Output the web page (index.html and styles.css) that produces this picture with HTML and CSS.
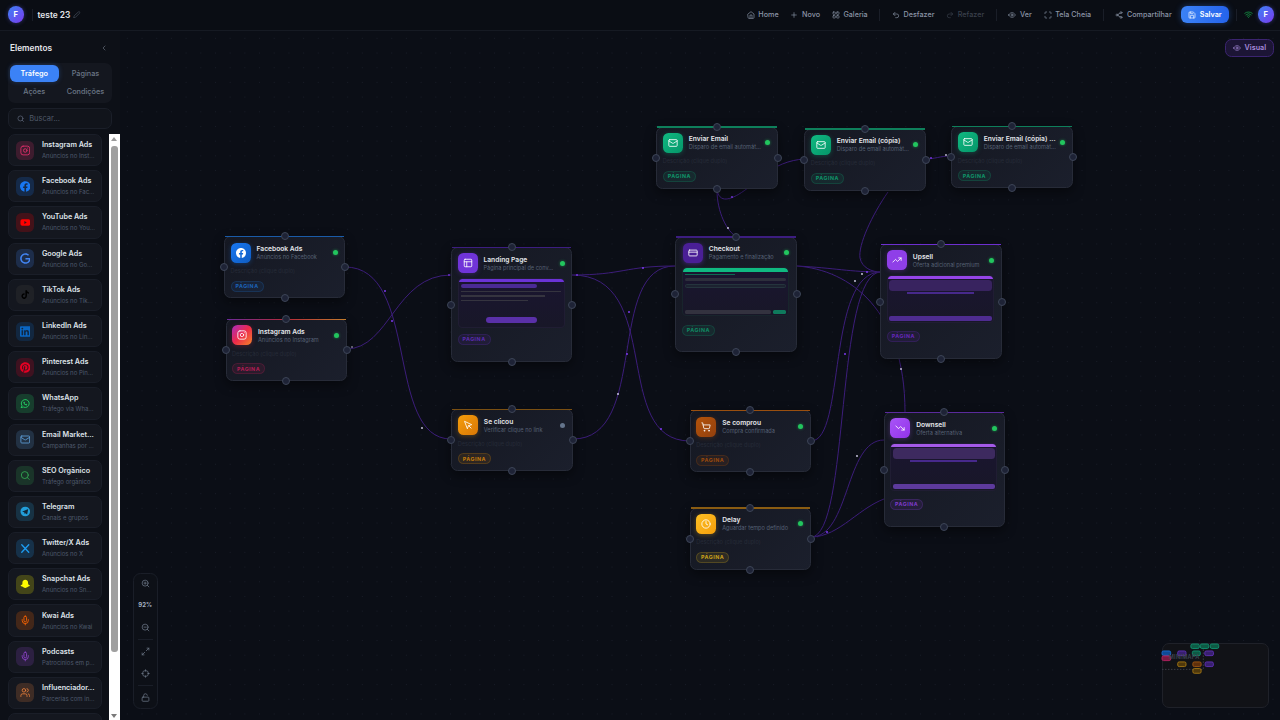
FILE: index.html
```html
<!DOCTYPE html>
<html lang="pt-BR">
<head>
<meta charset="utf-8">
<title>teste 23</title>
<link rel="stylesheet" href="styles.css">
</head>
<body>
<svg class="defs" aria-hidden="true">
  <symbol id="i-home" viewBox="0 0 24 24"><path d="M3 9l9-7 9 7v11a2 2 0 0 1-2 2H5a2 2 0 0 1-2-2z"/><path d="M9 22V12h6v10"/></symbol>
  <symbol id="i-plus" viewBox="0 0 24 24"><path d="M5 12h14M12 5v14"/></symbol>
  <symbol id="i-grid" viewBox="0 0 24 24"><rect x="3" y="3" width="7" height="7" rx="1.5"/><rect x="14" y="3" width="7" height="7" rx="1.5"/><rect x="3" y="14" width="7" height="7" rx="1.5"/><rect x="14" y="14" width="7" height="7" rx="1.5"/></symbol>
  <symbol id="i-undo" viewBox="0 0 24 24"><path d="M9 14 4 9l5-5"/><path d="M4 9h10.5a5.5 5.5 0 0 1 0 11H11"/></symbol>
  <symbol id="i-redo" viewBox="0 0 24 24"><path d="m15 14 5-5-5-5"/><path d="M20 9H9.5a5.5 5.5 0 0 0 0 11H13"/></symbol>
  <symbol id="i-eye" viewBox="0 0 24 24"><path d="M2 12s3-7 10-7 10 7 10 7-3 7-10 7-10-7-10-7Z"/><circle cx="12" cy="12" r="3"/></symbol>
  <symbol id="i-full" viewBox="0 0 24 24"><path d="M8 3H5a2 2 0 0 0-2 2v3M21 8V5a2 2 0 0 0-2-2h-3M3 16v3a2 2 0 0 0 2 2h3M16 21h3a2 2 0 0 0 2-2v-3"/></symbol>
  <symbol id="i-share" viewBox="0 0 24 24"><circle cx="18" cy="5" r="3"/><circle cx="6" cy="12" r="3"/><circle cx="18" cy="19" r="3"/><path d="m8.6 13.5 6.8 4M15.4 6.5l-6.8 4"/></symbol>
  <symbol id="i-save" viewBox="0 0 24 24"><path d="M15.2 3a2 2 0 0 1 1.4.6l3.8 3.8a2 2 0 0 1 .6 1.4V19a2 2 0 0 1-2 2H5a2 2 0 0 1-2-2V5a2 2 0 0 1 2-2z"/><path d="M17 21v-7a1 1 0 0 0-1-1H8a1 1 0 0 0-1 1v7"/><path d="M7 3v4a1 1 0 0 0 1 1h7"/></symbol>
  <symbol id="i-wifi" viewBox="0 0 24 24"><path d="M12 20h.01M2 8.82a15 15 0 0 1 20 0M5 12.86a10 10 0 0 1 14 0M8.5 16.43a5 5 0 0 1 7 0"/></symbol>
  <symbol id="i-pencil" viewBox="0 0 24 24"><path d="M17 3a2.85 2.83 0 1 1 4 4L7.5 20.5 2 22l1.5-5.5Z"/></symbol>
  <symbol id="i-chev" viewBox="0 0 24 24"><path d="m15 18-6-6 6-6"/></symbol>
  <symbol id="i-search" viewBox="0 0 24 24"><circle cx="11" cy="11" r="8"/><path d="m21 21-4.3-4.3"/></symbol>
  <symbol id="i-zin" viewBox="0 0 24 24"><circle cx="11" cy="11" r="8"/><path d="m21 21-4.3-4.3M11 8v6M8 11h6"/></symbol>
  <symbol id="i-zout" viewBox="0 0 24 24"><circle cx="11" cy="11" r="8"/><path d="m21 21-4.3-4.3M8 11h6"/></symbol>
  <symbol id="i-expand" viewBox="0 0 24 24"><path d="M21 3l-7 7M3 21l7-7M16 3h5v5M3 16v5h5"/></symbol>
  <symbol id="i-locate" viewBox="0 0 24 24"><circle cx="12" cy="12" r="8"/><path d="M12 2v4M12 18v4M2 12h4M18 12h4"/></symbol>
  <symbol id="i-unlock" viewBox="0 0 24 24"><rect x="3" y="11" width="18" height="11" rx="2"/><path d="M7 11V7a5 5 0 0 1 9.9-1"/></symbol>
  <symbol id="i-insta" viewBox="0 0 24 24"><rect x="2" y="2" width="20" height="20" rx="5"/><path d="M16 11.37A4 4 0 1 1 12.63 8 4 4 0 0 1 16 11.37z"/><path d="M17.5 6.5h.01"/></symbol>
  <symbol id="i-fb" viewBox="0 0 24 24"><path fill="currentColor" stroke="none" d="M24 12.07C24 5.4 18.63 0 12 0S0 5.4 0 12.07c0 6.02 4.39 11.02 10.13 11.93v-8.44H7.08v-3.49h3.05V9.41c0-3.02 1.79-4.69 4.53-4.69 1.31 0 2.68.24 2.68.24v2.97h-1.51c-1.49 0-1.96.93-1.96 1.89v2.25h3.33l-.53 3.49h-2.8V24C19.61 23.09 24 18.09 24 12.07z"/></symbol>
  <symbol id="i-yt" viewBox="0 0 24 24"><rect x="1" y="4.5" width="22" height="15" rx="4" fill="currentColor" stroke="none"/><path d="M10 8.8v6.4l5.4-3.2z" fill="#3a1418" stroke="none"/></symbol>
  <symbol id="i-google" viewBox="0 0 24 24"><path fill="currentColor" stroke="none" d="M12.48 10.92v3.28h7.84c-.24 1.84-.853 3.187-1.787 4.133-1.147 1.147-2.933 2.4-6.053 2.4-4.827 0-8.6-3.893-8.6-8.72s3.773-8.72 8.6-8.72c2.6 0 4.507 1.027 5.907 2.347l2.307-2.307C18.747 1.44 16.133 0 12.48 0 5.867 0 .307 5.387.307 12s5.56 12 12.173 12c3.573 0 6.267-1.173 8.373-3.36 2.16-2.16 2.84-5.213 2.84-7.667 0-.76-.053-1.467-.173-2.053H12.48z"/></symbol>
  <symbol id="i-tiktok" viewBox="0 0 24 24"><path fill="currentColor" stroke="none" d="M19.59 6.69a4.83 4.83 0 0 1-3.77-4.25V2h-3.45v13.67a2.89 2.89 0 0 1-5.2 1.74 2.89 2.89 0 0 1 2.31-4.64 2.93 2.93 0 0 1 .88.13V9.4a6.84 6.84 0 0 0-1-.05A6.33 6.33 0 0 0 5 20.1a6.34 6.34 0 0 0 10.86-4.43v-7a8.16 8.16 0 0 0 4.77 1.52v-3.4a4.85 4.85 0 0 1-1-.1z"/></symbol>
  <symbol id="i-in" viewBox="0 0 24 24"><path fill="currentColor" stroke="none" d="M20.447 20.452h-3.554v-5.569c0-1.328-.027-3.037-1.852-3.037-1.853 0-2.136 1.445-2.136 2.939v5.667H9.351V9h3.414v1.561h.046c.477-.9 1.637-1.85 3.37-1.85 3.601 0 4.267 2.37 4.267 5.455v6.286zM5.337 7.433a2.062 2.062 0 0 1-2.063-2.065 2.064 2.064 0 1 1 2.063 2.065zm1.782 13.019H3.555V9h3.564v11.452zM22.225 0H1.771C.792 0 0 .774 0 1.729v20.542C0 23.227.792 24 1.771 24h20.451C23.2 24 24 23.227 24 22.271V1.729C24 .774 23.2 0 22.222 0h.003z"/></symbol>
  <symbol id="i-pin" viewBox="0 0 24 24"><path fill="currentColor" stroke="none" d="M12.017 0C5.396 0 .029 5.367.029 11.987c0 5.079 3.158 9.417 7.618 11.162-.105-.949-.199-2.403.041-3.439.219-.937 1.406-5.957 1.406-5.957s-.359-.72-.359-1.781c0-1.663.967-2.911 2.168-2.911 1.024 0 1.518.769 1.518 1.688 0 1.029-.653 2.567-.992 3.992-.285 1.193.6 2.165 1.775 2.165 2.128 0 3.768-2.245 3.768-5.487 0-2.861-2.063-4.869-5.008-4.869-3.41 0-5.409 2.562-5.409 5.199 0 1.033.394 2.143.889 2.741.099.12.112.225.085.345-.09.375-.293 1.199-.334 1.363-.053.225-.172.271-.401.165-1.495-.69-2.433-2.878-2.433-4.646 0-3.776 2.748-7.252 7.92-7.252 4.158 0 7.392 2.967 7.392 6.923 0 4.135-2.607 7.462-6.233 7.462-1.214 0-2.354-.629-2.758-1.379l-.749 2.848c-.269 1.045-1.004 2.352-1.498 3.146 1.123.345 2.306.535 3.55.535 6.607 0 11.985-5.365 11.985-11.987C23.97 5.39 18.592.026 11.985.026L12.017 0z"/></symbol>
  <symbol id="i-wa" viewBox="0 0 24 24"><path d="M3 21l1.65-3.8a9 9 0 1 1 3.4 2.9L3 21"/><path d="M9 10a.5.5 0 0 0 1 0V9a.5.5 0 0 0-1 0v1a5 5 0 0 0 5 5h1a.5.5 0 0 0 0-1h-1a.5.5 0 0 0 0 1"/></symbol>
  <symbol id="i-mail" viewBox="0 0 24 24"><rect x="2" y="4" width="20" height="16" rx="2"/><path d="m22 7-8.97 5.7a1.94 1.94 0 0 1-2.06 0L2 7"/></symbol>
  <symbol id="i-tg" viewBox="0 0 24 24"><circle cx="12" cy="12" r="11" fill="currentColor" stroke="none"/><path fill="#10283a" stroke="none" d="M5.5 11.8 17.6 7c.6-.2 1 .2.9.9l-2 9.6c-.1.7-.6.8-1.1.5l-3-2.2-1.5 1.4c-.2.2-.5.3-.6-.1l-.6-3.5-3.9-1.2c-.7-.2-.7-.6-.2-.8z"/></symbol>
  <symbol id="i-x" viewBox="0 0 24 24"><path stroke-width="3" d="M4 3.5 20 20.5M20 3.5 4 20.5"/></symbol>
  <symbol id="i-snap" viewBox="0 0 24 24"><path fill="currentColor" stroke="none" d="M12 3c3.5 0 5.5 2.5 5.5 6v2.5l3.5 2.5c-.6 1.3-2.3 1.7-3.7 1.9-.3 1.1-1 1.4-2 1.2-1.2.7-2 1.400-3.300 1.400s-2.100-.7-3.300-1.400c-1 .2-1.700-.1-2-1.200-1.400-.2-3.100-.6-3.700-1.900l3.500-2.500V9c0-3.500 2-6 5.500-6z"/></symbol>
  <symbol id="i-mic" viewBox="0 0 24 24"><path d="M12 2a3 3 0 0 0-3 3v7a3 3 0 0 0 6 0V5a3 3 0 0 0-3-3Z"/><path d="M19 10v2a7 7 0 0 1-14 0v-2M12 19v3"/></symbol>
  <symbol id="i-users" viewBox="0 0 24 24"><path d="M16 21v-2a4 4 0 0 0-4-4H6a4 4 0 0 0-4 4v2"/><circle cx="9" cy="7" r="4"/><path d="M22 21v-2a4 4 0 0 0-3-3.87M16 3.13a4 4 0 0 1 0 7.75"/></symbol>
  <symbol id="i-layout" viewBox="0 0 24 24"><rect x="3" y="3" width="18" height="18" rx="2"/><path d="M3 9h18M9 21V9"/></symbol>
  <symbol id="i-card" viewBox="0 0 24 24"><rect x="2" y="5" width="20" height="14" rx="2"/><path d="M2 10h20"/></symbol>
  <symbol id="i-up" viewBox="0 0 24 24"><path d="M22 7l-8.5 8.5-5-5L2 17"/><path d="M16 7h6v6"/></symbol>
  <symbol id="i-down" viewBox="0 0 24 24"><path d="M22 17l-8.5-8.5-5 5L2 7"/><path d="M16 17h6v-6"/></symbol>
  <symbol id="i-click" viewBox="0 0 24 24"><path d="M4 4l6.500 17 2.400-7.100L20 11.500Z"/><path d="m13.500 13.500 6 6"/></symbol>
  <symbol id="i-cart" viewBox="0 0 24 24"><circle cx="8" cy="21" r="1"/><circle cx="19" cy="21" r="1"/><path d="M2 2h2l2.7 12.4a2 2 0 0 0 2 1.600h9.800a2 2 0 0 0 1.900-1.600L22 7H5.100"/></symbol>
  <symbol id="i-clock" viewBox="0 0 24 24"><circle cx="12" cy="12" r="10"/><path d="M12 6v6l4 2"/></symbol>
</svg>

<div class="app">
  <header class="topbar">
    <div class="tb-left">
      <span class="avatar">F</span>
      <span class="tb-divider"></span>
      <span class="project">teste 23</span>
      <svg class="ic pencil"><use href="#i-pencil"/></svg>
    </div>
    <nav class="tb-right">
      <a class="tb-link"><svg class="ic"><use href="#i-home"/></svg>Home</a>
      <a class="tb-link"><svg class="ic"><use href="#i-plus"/></svg>Novo</a>
      <a class="tb-link"><svg class="ic"><use href="#i-grid"/></svg>Galeria</a>
      <span class="tb-divider sep"></span>
      <a class="tb-link"><svg class="ic"><use href="#i-undo"/></svg>Desfazer</a>
      <a class="tb-link disabled"><svg class="ic"><use href="#i-redo"/></svg>Refazer</a>
      <span class="tb-divider sep"></span>
      <a class="tb-link"><svg class="ic"><use href="#i-eye"/></svg>Ver</a>
      <a class="tb-link"><svg class="ic"><use href="#i-full"/></svg>Tela Cheia</a>
      <span class="tb-divider sep"></span>
      <a class="tb-link"><svg class="ic"><use href="#i-share"/></svg>Compartilhar</a>
      <button class="save"><svg class="ic"><use href="#i-save"/></svg>Salvar</button>
      <span class="tb-divider sep2"></span>
      <svg class="ic wifi"><use href="#i-wifi"/></svg>
      <span class="avatar">F</span>
    </nav>
  </header>

  <main class="main">
    <aside class="sidebar">
      <div class="side-head"><h2>Elementos</h2><svg class="ic"><use href="#i-chev"/></svg></div>
      <div class="tabs">
        <span class="tab active">Tráfego</span>
        <span class="tab">Páginas</span>
        <span class="tab">Ações</span>
        <span class="tab">Condições</span>
      </div>
      <div class="search"><svg class="ic"><use href="#i-search"/></svg><span>Buscar...</span></div>
      <div class="list-wrap">
        <ul class="list">
          <li class="item s-insta"><span class="item-ic"><svg class="ic"><use href="#i-insta"/></svg></span><div class="item-text"><b>Instagram Ads</b><small>Anúncios no Inst...</small></div></li>
          <li class="item s-fb"><span class="item-ic"><svg class="ic"><use href="#i-fb"/></svg></span><div class="item-text"><b>Facebook Ads</b><small>Anúncios no Fac...</small></div></li>
          <li class="item s-yt"><span class="item-ic"><svg class="ic"><use href="#i-yt"/></svg></span><div class="item-text"><b>YouTube Ads</b><small>Anúncios no You...</small></div></li>
          <li class="item s-g"><span class="item-ic"><svg class="ic"><use href="#i-google"/></svg></span><div class="item-text"><b>Google Ads</b><small>Anúncios no Go...</small></div></li>
          <li class="item s-tt"><span class="item-ic"><svg class="ic"><use href="#i-tiktok"/></svg></span><div class="item-text"><b>TikTok Ads</b><small>Anúncios no Tik...</small></div></li>
          <li class="item s-in"><span class="item-ic"><svg class="ic"><use href="#i-in"/></svg></span><div class="item-text"><b>LinkedIn Ads</b><small>Anúncios no Lin...</small></div></li>
          <li class="item s-pin"><span class="item-ic"><svg class="ic"><use href="#i-pin"/></svg></span><div class="item-text"><b>Pinterest Ads</b><small>Anúncios no Pin...</small></div></li>
          <li class="item s-wa"><span class="item-ic"><svg class="ic"><use href="#i-wa"/></svg></span><div class="item-text"><b>WhatsApp</b><small>Tráfego via Wha...</small></div></li>
          <li class="item s-mail"><span class="item-ic"><svg class="ic"><use href="#i-mail"/></svg></span><div class="item-text"><b>Email Market...</b><small>Campanhas por ...</small></div></li>
          <li class="item s-seo"><span class="item-ic"><svg class="ic"><use href="#i-search"/></svg></span><div class="item-text"><b>SEO Orgânico</b><small>Tráfego orgânico</small></div></li>
          <li class="item s-tg"><span class="item-ic"><svg class="ic"><use href="#i-tg"/></svg></span><div class="item-text"><b>Telegram</b><small>Canais e grupos</small></div></li>
          <li class="item s-x"><span class="item-ic"><svg class="ic"><use href="#i-x"/></svg></span><div class="item-text"><b>Twitter/X Ads</b><small>Anúncios no X</small></div></li>
          <li class="item s-snap"><span class="item-ic"><svg class="ic"><use href="#i-snap"/></svg></span><div class="item-text"><b>Snapchat Ads</b><small>Anúncios no Sn...</small></div></li>
          <li class="item s-kwai"><span class="item-ic"><svg class="ic"><use href="#i-mic"/></svg></span><div class="item-text"><b>Kwai Ads</b><small>Anúncios no Kwai</small></div></li>
          <li class="item s-pod"><span class="item-ic"><svg class="ic"><use href="#i-mic"/></svg></span><div class="item-text"><b>Podcasts</b><small>Patrocínios em p...</small></div></li>
          <li class="item s-inf"><span class="item-ic"><svg class="ic"><use href="#i-users"/></svg></span><div class="item-text"><b>Influenciador...</b><small>Parcerias com in...</small></div></li>
          <li class="item s-last"><span class="item-ic"></span></li>
        </ul>
        <div class="scrollbar"><i class="arrow up"></i><i class="thumb"></i><i class="arrow dn"></i></div>
      </div>
    </aside>

    <section class="canvas">
      <svg class="edges" viewBox="120 31 1160 689">
        <g class="edge-lines">
          <path d="M345 267C420 267 385 439 451 439"/>
          <path d="M346 349C390 349 395 275 451 275"/>
          <path d="M572 275C624 275 624 266 675 266"/>
          <path d="M572 275C665 275 610 441 690 441"/>
          <path d="M573 439C650 439 605 266 675 266"/>
          <path d="M717 190C720 206 735 200 760 178C775 165 790 160 804 159"/>
          <path d="M717 190C717 212 727 232 737 237"/>
          <path d="M888 192C872 215 858 245 860 258C862 268 872 272 881 272"/>
          <path d="M925 159C935 159 940 156 951 156"/>
          <path d="M797 266C835 268 850 272 881 272"/>
          <path d="M797 266C850 270 905 310 905 412"/>
          <path d="M811 441C846 441 826 272 881 272"/>
          <path d="M811 537C850 537 835 272 881 272"/>
          <path d="M811 537C850 537 845 440 884 440"/>
          <path d="M811 537C840 537 860 505 890 497"/>
        </g>
        <g class="edge-dots">
          <circle cx="385" cy="291" r="1"/>
          <circle cx="392" cy="321" r="1"/>
          <circle cx="352" cy="347" r=".8" class="light"/>
          <circle cx="422" cy="428" r=".9" class="light"/>
          <circle cx="449" cy="275" r="1"/>
          <circle cx="577" cy="275" r="1"/>
          <circle cx="643" cy="268" r="1"/>
          <circle cx="629" cy="312" r="1"/>
          <circle cx="627" cy="354" r="1"/>
          <circle cx="618" cy="394" r=".9" class="light"/>
          <circle cx="661" cy="429" r="1"/>
          <circle cx="728" cy="228" r=".9" class="light"/>
          <circle cx="732" cy="197" r="1"/>
          <circle cx="931" cy="158" r="1"/>
          <circle cx="946" cy="155" r=".9" class="light"/>
          <circle cx="867" cy="272" r="1"/>
          <circle cx="862" cy="274" r=".9" class="light"/>
          <circle cx="855" cy="281" r=".9" class="light"/>
          <circle cx="845" cy="354" r="1"/>
          <circle cx="901" cy="369" r=".9" class="light"/>
          <circle cx="857" cy="456" r=".9" class="light"/>
          <circle cx="827" cy="532" r="1"/>
        </g>
      </svg>

      <article class="node plain n-fb c-fb">
        <i class="handle ht"></i><i class="handle hb"></i><i class="handle hl"></i><i class="handle hr"></i>
        <header class="node-head"><span class="node-ic"><svg class="ic"><use href="#i-fb"/></svg></span><div class="node-text"><div class="node-title">Facebook Ads</div><div class="node-sub">Anúncios no Facebook</div></div><i class="status"></i></header>
        <p class="node-desc">Descrição (clique duplo)</p><span class="badge">PÁGINA</span>
      </article>
      <article class="node plain n-ig c-ig">
        <i class="handle ht"></i><i class="handle hb"></i><i class="handle hl"></i><i class="handle hr"></i>
        <header class="node-head"><span class="node-ic"><svg class="ic"><use href="#i-insta"/></svg></span><div class="node-text"><div class="node-title">Instagram Ads</div><div class="node-sub">Anúncios no Instagram</div></div><i class="status"></i></header>
        <p class="node-desc">Descrição (clique duplo)</p><span class="badge">PÁGINA</span>
      </article>
      <article class="node tall n-lp c-lp">
        <i class="handle ht"></i><i class="handle hb"></i><i class="handle hl"></i><i class="handle hr"></i>
        <header class="node-head"><span class="node-ic"><svg class="ic"><use href="#i-layout"/></svg></span><div class="node-text"><div class="node-title">Landing Page</div><div class="node-sub">Página principal de conv...</div></div><i class="status"></i></header>
        <div class="preview pv-lp"><i class="pv-top"></i><i class="pv-head"></i><i class="pv-line l1"></i><i class="pv-line l2"></i><i class="pv-line l3"></i><i class="pv-cta"></i></div>
        <span class="badge">PÁGINA</span>
      </article>
      <article class="node plain n-click c-click">
        <i class="handle ht"></i><i class="handle hb"></i><i class="handle hl"></i><i class="handle hr"></i>
        <header class="node-head"><span class="node-ic"><svg class="ic"><use href="#i-click"/></svg></span><div class="node-text"><div class="node-title">Se clicou</div><div class="node-sub">Verificar clique no link</div></div><i class="status off"></i></header>
        <p class="node-desc">Descrição (clique duplo)</p><span class="badge">PÁGINA</span>
      </article>
      <article class="node plain n-m1 c-mail">
        <i class="handle ht"></i><i class="handle hb"></i><i class="handle hl"></i><i class="handle hr"></i>
        <header class="node-head"><span class="node-ic"><svg class="ic"><use href="#i-mail"/></svg></span><div class="node-text"><div class="node-title">Enviar Email</div><div class="node-sub">Disparo de email automát...</div></div><i class="status"></i></header>
        <p class="node-desc">Descrição (clique duplo)</p><span class="badge">PÁGINA</span>
      </article>
      <article class="node plain n-m2 c-mail">
        <i class="handle ht"></i><i class="handle hb"></i><i class="handle hl"></i><i class="handle hr"></i>
        <header class="node-head"><span class="node-ic"><svg class="ic"><use href="#i-mail"/></svg></span><div class="node-text"><div class="node-title">Enviar Email (cópia)</div><div class="node-sub">Disparo de email automát...</div></div><i class="status"></i></header>
        <p class="node-desc">Descrição (clique duplo)</p><span class="badge">PÁGINA</span>
      </article>
      <article class="node plain n-m3 c-mail">
        <i class="handle ht"></i><i class="handle hb"></i><i class="handle hl"></i><i class="handle hr"></i>
        <header class="node-head"><span class="node-ic"><svg class="ic"><use href="#i-mail"/></svg></span><div class="node-text"><div class="node-title">Enviar Email (cópia) ...</div><div class="node-sub">Disparo de email automát...</div></div><i class="status"></i></header>
        <p class="node-desc">Descrição (clique duplo)</p><span class="badge">PÁGINA</span>
      </article>
      <article class="node tall n-co c-co">
        <i class="handle ht"></i><i class="handle hb"></i><i class="handle hl"></i><i class="handle hr"></i>
        <header class="node-head"><span class="node-ic"><svg class="ic"><use href="#i-card"/></svg></span><div class="node-text"><div class="node-title">Checkout</div><div class="node-sub">Pagamento e finalização</div></div><i class="status"></i></header>
        <div class="preview pv-co"><i class="pv-top"></i><i class="co-head"></i><i class="co-a"></i><i class="co-b"></i><div class="co-foot"><i class="co-c"></i><i class="co-d"></i></div></div>
        <span class="badge">PÁGINA</span>
      </article>
      <article class="node tall n-up c-up">
        <i class="handle ht"></i><i class="handle hb"></i><i class="handle hl"></i><i class="handle hr"></i>
        <header class="node-head"><span class="node-ic"><svg class="ic"><use href="#i-up"/></svg></span><div class="node-text"><div class="node-title">Upsell</div><div class="node-sub">Oferta adicional premium</div></div><i class="status"></i></header>
        <div class="preview pv-of"><i class="pv-top"></i><i class="of-panel"></i><i class="of-bar"></i><i class="of-cta"></i></div>
        <span class="badge">PÁGINA</span>
      </article>
      <article class="node tall n-dn c-dn">
        <i class="handle ht"></i><i class="handle hb"></i><i class="handle hl"></i><i class="handle hr"></i>
        <header class="node-head"><span class="node-ic"><svg class="ic"><use href="#i-down"/></svg></span><div class="node-text"><div class="node-title">Downsell</div><div class="node-sub">Oferta alternativa</div></div><i class="status"></i></header>
        <div class="preview pv-of"><i class="pv-top"></i><i class="of-panel"></i><i class="of-bar"></i><i class="of-cta"></i></div>
        <span class="badge">PÁGINA</span>
      </article>
      <article class="node plain n-buy c-buy">
        <i class="handle ht"></i><i class="handle hb"></i><i class="handle hl"></i><i class="handle hr"></i>
        <header class="node-head"><span class="node-ic"><svg class="ic"><use href="#i-cart"/></svg></span><div class="node-text"><div class="node-title">Se comprou</div><div class="node-sub">Compra confirmada</div></div><i class="status"></i></header>
        <p class="node-desc">Descrição (clique duplo)</p><span class="badge">PÁGINA</span>
      </article>
      <article class="node plain n-delay c-delay">
        <i class="handle ht"></i><i class="handle hb"></i><i class="handle hl"></i><i class="handle hr"></i>
        <header class="node-head"><span class="node-ic"><svg class="ic"><use href="#i-clock"/></svg></span><div class="node-text"><div class="node-title">Delay</div><div class="node-sub">Aguardar tempo definido</div></div><i class="status"></i></header>
        <p class="node-desc">Descrição (clique duplo)</p><span class="badge">PÁGINA</span>
      </article>

      <button class="visual"><svg class="ic"><use href="#i-eye"/></svg>Visual</button>

      <div class="zoombar">
        <span class="z-btn"><svg class="ic"><use href="#i-zin"/></svg></span>
        <span class="z-label">92%</span>
        <span class="z-btn"><svg class="ic"><use href="#i-zout"/></svg></span>
        <i class="z-sep"></i>
        <span class="z-btn"><svg class="ic"><use href="#i-expand"/></svg></span>
        <span class="z-btn"><svg class="ic"><use href="#i-locate"/></svg></span>
        <i class="z-sep"></i>
        <span class="z-btn"><svg class="ic"><use href="#i-unlock"/></svg></span>
      </div>

      <div class="minimap">
        <svg class="mm-svg" viewBox="0 0 108 66">
          <path class="mm-view" d="M0 26.5H41.5V5"/>
          <g class="mm-n teal"><rect x="29" y="1" width="8.5" height="4.5" rx="1.5"/><rect x="38.5" y="1" width="8.5" height="4.5" rx="1.5"/><rect x="48.5" y="1" width="8.5" height="4.5" rx="1.5"/><rect x="30.5" y="8" width="8" height="4.7" rx="1.5"/></g>
          <g class="mm-n purple"><rect x="15.8" y="8" width="8.3" height="4.7" rx="1.5"/><rect x="43" y="8" width="8.7" height="4.7" rx="1.5"/><rect x="43.3" y="19" width="8.3" height="4.7" rx="1.5"/></g>
          <g class="mm-n blue"><rect y="8" width="8.7" height="4.4" rx="1.5"/></g>
          <g class="mm-n pink"><rect y="13" width="8.7" height="4.7" rx="1.5"/></g>
          <g class="mm-n yellow"><rect x="15.8" y="19" width="8.3" height="4.7" rx="1.5"/><rect x="31" y="25.7" width="8.3" height="4.7" rx="1.5"/></g>
          <g class="mm-n orange"><rect x="31" y="19" width="8.3" height="4.7" rx="1.5"/></g>
        </svg>
        <span class="mm-label">MINIMAPA</span>
      </div>
    </section>
  </main>
</div>
</body>
</html>
```

FILE: styles.css
```css
* { box-sizing: border-box; }
html, body { margin: 0; height: 100%; overflow: hidden; }
body { background: #0b0e16; color: #e5e7eb; font-family: "Inter", "Liberation Sans", sans-serif; }
.defs { position: absolute; width: 0; height: 0; }
.ic { display: block; width: 100%; height: 100%; fill: none; stroke: currentColor; stroke-width: 2; stroke-linecap: round; stroke-linejoin: round; }
i { display: block; font-style: normal; }

.app { display: flex; flex-direction: column; height: 720px; }

/* top bar */
.topbar { height: 31px; flex: none; display: flex; justify-content: space-between; align-items: center; padding: 0 6px 1px 7.5px; background: #0a0d14; border-bottom: 1px solid #161a23; }
.tb-left { display: flex; align-items: center; }
.avatar { width: 16.5px; height: 16.5px; border-radius: 50%; background: linear-gradient(135deg, #3b82f6, #7c3aed); color: #fff; font-size: 7.5px; font-weight: 700; display: flex; align-items: center; justify-content: center; box-shadow: 0 0 4px rgba(99, 102, 241, .4); }
.tb-divider { width: 1px; height: 12px; background: #1a1e28; margin: 0 5px 0 7.5px; }
.project { font-size: 8.4px; font-weight: 600; color: #e5e7eb; }
.pencil { width: 7.5px; height: 7.5px; margin-left: 3px; color: #4b5563; }
.tb-right { display: flex; align-items: center; }
.tb-link { display: flex; align-items: center; gap: 3.6px; font-size: 7.2px; font-weight: 500; color: #8a94a6; margin-right: 11.8px; }
.tb-link .ic { width: 8px; height: 8px; flex: none; }
.tb-link.disabled { color: #3a404c; }
.sep { margin: 0 11.5px 0 0; }
.sep2 { margin: 0 7px 0 7px; }
.save { width: 48.5px; height: 17px; margin-left: -3px; border: 0; border-radius: 6px; background: linear-gradient(90deg, #3b82f6, #2563eb); box-shadow: 0 0 6px rgba(59, 130, 246, .4); color: #fff; font: 600 7.2px "Inter", sans-serif; display: flex; align-items: center; justify-content: center; gap: 4px; padding: 0; }
.save .ic { width: 8px; height: 8px; }
.wifi { width: 9px; height: 9px; color: #16a34a; margin-right: 4.5px; flex: none; }

/* layout */
.main { flex: 1; display: flex; min-height: 0; }
.sidebar { width: 120px; flex: none; background: #0d1017; display: flex; flex-direction: column; overflow: hidden; }
.side-head { height: 32px; flex: none; display: flex; align-items: center; justify-content: space-between; padding: 2px 12.5px 0 10px; }
.side-head h2 { margin: 0; font-size: 8.3px; font-weight: 600; color: #e5e7eb; }
.side-head .ic { width: 8px; height: 8px; color: #6b7280; }
.tabs { margin: 0 7.5px; width: 104.5px; height: 40px; flex: none; padding: 2px; border-radius: 7px; background: #14171f; display: grid; grid-template-columns: 49.5px 1fr; grid-auto-rows: 16.5px; column-gap: 2px; row-gap: 1.5px; }
.tab { border-radius: 6px; display: flex; align-items: center; justify-content: center; font-size: 7.3px; font-weight: 500; color: #6b7686; }
.tab.active { background: #3b82f6; color: #fff; font-weight: 600; box-shadow: 0 0 5px rgba(59, 130, 246, .3); }
.search { margin: 5px 7.5px 0; width: 104.5px; height: 21px; flex: none; display: flex; align-items: center; gap: 5.2px; padding-left: 8px; border-radius: 7px; background: #11141b; border: 1px solid #1b1f29; font-size: 7.5px; color: #4f5867; }
.search .ic { width: 7.5px; height: 7.5px; color: #667085; flex: none; }
.list-wrap { flex: 1; min-height: 0; margin-top: 5px; display: flex; }
.list { list-style: none; margin: 0; padding: 0 7px 0 7.7px; width: 109px; flex: none; height: 100%; overflow: hidden; display: flex; flex-direction: column; gap: 4px; }
.item { height: 32.2px; flex: none; display: flex; align-items: center; padding-left: 7px; gap: 7.8px; border-radius: 7px; background: #14171f; border: 1px solid #1a1e28; }
.item-ic { width: 18.5px; height: 19px; flex: none; border-radius: 5.5px; padding: 4px; background: color-mix(in srgb, var(--c) 20%, #14171f); color: var(--c); }
.s-snap .item-ic { padding: 3px; }
.item-text { min-width: 0; width: 52.5px; }
.item-text b, .item-text small { display: block; white-space: nowrap; }
.item-text b { font-size: 7.2px; font-weight: 600; color: #dfe3ea; line-height: 10px; }
.item-text small { font-size: 6px; color: #4f5a6d; line-height: 9px; margin-top: 1px; }
.s-insta { --c: #e1306c; } .s-fb { --c: #1877f2; } .s-yt { --c: #ff0000; } .s-g { --c: #4285f4; }
.s-tt { --c: #000000; } .s-tt .item-ic { background: #1f2126; } .s-in { --c: #0a66c2; } .s-pin { --c: #e60023; } .s-wa { --c: #25d366; }
.s-mail { --c: #5b9bd5; } .s-seo { --c: #34a853; } .s-tg { --c: #229ed9; } .s-x { --c: #1d9bf0; }
.s-snap { --c: #fffc00; } .s-kwai { --c: #ff6600; } .s-pod { --c: #8e44c9; } .s-inf { --c: #e67e3c; } .s-last { --c: #14b8a6; }
.scrollbar { width: 11px; flex: none; background: #fff; position: relative; }
.thumb { position: absolute; left: 2.3px; width: 6.4px; top: 12px; height: 506px; background: #a0a0a0; border-radius: 3px; }
.arrow { position: absolute; left: 2px; width: 0; height: 0; border-left: 3.5px solid transparent; border-right: 3.5px solid transparent; }
.arrow.up { top: 3px; border-bottom: 4px solid #9a9a9a; }
.arrow.dn { bottom: 2px; border-top: 4px solid #7a7a7a; }

/* canvas */
.canvas { flex: 1; position: relative; overflow: hidden; background-color: #0b0e16; background-image: radial-gradient(circle, #181c27 .7px, transparent .9px); background-size: 14.7px 14.7px; }
.edges { position: absolute; left: 0; top: 0; width: 1160px; height: 689px; }
.edge-lines path { fill: none; stroke: #3c1d7a; stroke-width: 1; }
.edge-dots circle { fill: #7c3aed; }
.edge-dots .light { fill: #d8d4ee; }

.node { position: absolute; width: 121.3px; padding: 5.3px 6.5px 5.3px 5.5px; border-radius: 6.5px; background: linear-gradient(135deg, #151822, #1b1f2c); border: 1px solid #272b38; box-shadow: 0 4px 12px rgba(0, 0, 0, .45); --accent: #333; --ic: #333; --b: #888; }
.node::before { content: ""; position: absolute; left: 0; right: 0; top: -1.5px; height: 1.5px; background: var(--accent); }
.plain { height: 62px; }
.tall { height: 115px; }
.handle { position: absolute; width: 8px; height: 8px; border-radius: 50%; background: #1e2336; border: 1px solid #3d4557; z-index: 2; }
.ht { left: 50%; top: -5px; margin-left: -4px; }
.hb { left: 50%; bottom: -5px; margin-left: -4px; }
.hl { top: 50%; left: -5px; margin-top: -4px; }
.hr { top: 50%; right: -5px; margin-top: -4px; }
.node-head { display: flex; align-items: flex-start; height: 20px; }
.c-co .node-head { margin-left: 1px; }
.node-ic { width: 20px; height: 20px; flex: none; padding: 5px; border-radius: 5.5px; background: var(--ic); color: #fff; box-shadow: 0 1px 5px var(--glow, rgba(0, 0, 0, .3)); }
.node-text { width: 74px; margin-left: 6px; min-width: 0; }
.node-title { font-size: 6.7px; font-weight: 600; color: #e5e7eb; line-height: 8.2px; margin-top: 2.3px; white-space: nowrap; }
.node-sub { font-size: 5.6px; color: #566074; line-height: 8px; white-space: nowrap; }
.status { width: 5px; height: 5px; flex: none; border-radius: 50%; background: #22c55e; margin: 7.5px 0 0 auto; box-shadow: 0 0 3px rgba(34, 197, 94, .6); }
.status.off { background: #64748b; box-shadow: none; }
.node-desc { margin: 5.5px 0; font-size: 5.6px; line-height: 7px; color: #262b38; }
.badge { display: flex; align-items: center; justify-content: center; width: 33px; height: 11px; border-radius: 6px; font-size: 5.3px; font-weight: 700; letter-spacing: .5px; color: var(--b); background: color-mix(in srgb, var(--b) 12%, transparent); border: 1px solid color-mix(in srgb, var(--b) 25%, transparent); }
.tall .badge { margin-top: 6px; }

.c-fb { --accent: #1a5ba8; --ic: linear-gradient(135deg, #1877f2, #0f5cc0); --b: #1c62b8; --glow: rgba(24, 119, 242, .3); }
.c-ig { --accent: linear-gradient(90deg, #6b2a9a, #b52a3a, #c27c2c); --ic: linear-gradient(135deg, #a82cc0, #ee2a4a, #f58529); --b: #b11d55; --glow: rgba(221, 42, 75, .3); }
.c-lp { --accent: #3c1d80; --ic: #7034d8; --b: #5b2bb0; --glow: rgba(124, 58, 237, .3); }
.c-click { --accent: #7a4f12; --ic: linear-gradient(135deg, #f59e0b, #d97706); --b: #c27a0a; --glow: rgba(245, 158, 11, .3); }
.c-mail { --accent: #0e7f5b; --ic: linear-gradient(135deg, #10b981, #059669); --b: #0f9469; --glow: rgba(16, 185, 129, .3); }
.c-co { --accent: #3c1d80; --ic: #4a1f96; --b: #0f8a63; --glow: rgba(124, 58, 237, .4); }
.c-up { --accent: #6d2fd0; --ic: #8f3fe8; --b: #6527b8; --glow: rgba(147, 51, 234, .3); }
.c-dn { --accent: #5a2a9c; --ic: linear-gradient(135deg, #a855f7, #9333ea); --b: #7c3ac8; --glow: rgba(168, 85, 247, .3); }
.c-buy { --accent: #9a4f0f; --ic: linear-gradient(135deg, #b4530a, #92400e); --b: #9a4a0c; --glow: rgba(180, 83, 10, .3); }
.c-delay { --accent: #8a5c12; --ic: linear-gradient(135deg, #fbbf24, #f59e0b); --b: #c9a11a; --glow: rgba(251, 191, 36, .3); }

.n-fb { left: 104px; top: 205.3px; }
.n-ig { left: 105.5px; top: 288px; }
.n-lp { left: 331px; top: 216px; }
.n-click { left: 331.3px; top: 378px; }
.n-m1 { left: 536.3px; top: 95.7px; }
.n-m2 { left: 684.3px; top: 97.7px; }
.n-m3 { left: 831.3px; top: 95px; }
.n-co { left: 555.3px; top: 205.7px; }
.n-up { left: 760.3px; top: 213px; }
.n-dn { left: 763.7px; top: 381px; }
.n-buy { left: 569.7px; top: 379.3px; }
.n-delay { left: 569.7px; top: 476.7px; }

/* page previews */
.preview { margin-top: 4.3px; height: 50px; border-radius: 4px; background: linear-gradient(180deg, #1a1530, #181728); border: 1px solid #201d33; display: flex; flex-direction: column; overflow: hidden; padding: 0 2.5px; }
.pv-top { height: 3.3px; flex: none; margin: 0 -2.5px; background: var(--top, #6d2fd0); border-radius: 4px 4px 0 0; }
.pv-lp { --top: #6b33d6; }
.pv-head { height: 4px; width: 76px; flex: none; margin-top: 1.7px; background: #4a2a94; border-radius: 2px; }
.pv-line { height: 1.5px; flex: none; background: #35343f; margin-top: 3px; }
.pv-line.l1 { width: 100px; }
.pv-line.l2 { width: 84px; }
.pv-line.l3 { width: 67px; }
.pv-cta { width: 51px; height: 6.5px; flex: none; margin: 15.8px auto 0; border-radius: 3.5px; background: #5a30a8; }

.pv-co { --top: #10b981; height: 49px; border-color: #18242c; }
.co-head { width: 50px; height: 1.7px; flex: none; margin-top: 2px; background: #0d6b52; }
.co-a { height: 3.3px; flex: none; margin-top: 2.6px; background: #2d2f3c; border-radius: 1.5px; }
.co-b { height: 4px; flex: none; margin-top: 2.7px; background: #1c2230; border: .7px solid #25343d; border-radius: 1.5px; }
.co-foot { display: flex; gap: 1.3px; margin-top: 22px; }
.co-c { width: 87px; height: 4.3px; background: #33323f; border-radius: 1.5px; }
.co-d { width: 13px; height: 4.3px; background: #0f7a5c; border-radius: 1.5px; }

.pv-of { --top: #9545e8; height: 48px; padding: 0 1.5px; }
.pv-of .pv-top { margin: 0 -1.5px; }
.c-dn .pv-of { --top: #a45ae8; }
.of-panel { height: 10.7px; flex: none; margin-top: 1.4px; border-radius: 3.5px; background: #38235f; }
.of-bar { width: 67px; height: 2px; flex: none; margin: 1.3px auto 0; background: #47298c; }
.of-cta { height: 4.7px; flex: none; margin-top: 22px; border-radius: 2px; background: #4e2c90; }
.c-dn .of-panel { background: #3d2a5f; }
.c-dn .of-cta { background: #5d3a9c; }
.c-up .badge, .c-dn .badge { margin-top: 8px; }
.c-co .badge { margin-top: 8.5px; }

/* overlays */
.visual { position: absolute; left: 1104.6px; top: 7.5px; width: 49.5px; height: 18.5px; border-radius: 6.5px; border: 1px solid #3b2470; background: #1c1535; color: #a78bdc; font: 600 7.2px "Inter", sans-serif; display: flex; align-items: center; justify-content: center; gap: 4px; padding: 0; }
.visual .ic { width: 8px; height: 8px; }
.zoombar { position: absolute; left: 12.7px; top: 542.3px; width: 25px; height: 135.7px; border-radius: 7.5px; background: #0d1017; border: 1px solid #1a1e28; display: flex; flex-direction: column; align-items: center; color: #6b7686; padding-top: 4.9px; }
.z-btn { width: 9px; height: 9px; flex: none; margin-top: 12.8px; }
.z-btn:first-child { margin-top: 0; }
.z-label { height: 10px; flex: none; margin-top: 11.8px; font-size: 6px; font-weight: 700; color: #a3b0c2; line-height: 10px; }
.z-sep { width: 15px; height: 1px; background: #1a1e28; margin: 7px 0; flex: none; }
.z-sep + .z-btn { margin-top: 0; }
.minimap { position: absolute; left: 1041.7px; top: 611.7px; width: 107.5px; height: 65.7px; border-radius: 7px; background: #111217; border: 1px solid #1f2129; }
.mm-svg { position: absolute; left: -1px; top: -1px; width: 107.5px; height: 65.7px; overflow: visible; }
.mm-n rect { stroke-width: .9; }
.teal { fill: #0d5a44; stroke: #119370; }
.purple { fill: #38206e; stroke: #6030b8; }
.blue { fill: #0f4a94; stroke: #1a6fd6; }
.pink { fill: #7a1a42; stroke: #b82262; }
.yellow { fill: #4f380c; stroke: #a87a14; }
.orange { fill: #5f300c; stroke: #a35a12; }
.mm-view { fill: none; stroke: #3a3d48; stroke-width: 1; stroke-dasharray: 1.5 1.5; }
.mm-label { position: absolute; left: 6px; top: 10px; font-size: 5.5px; font-weight: 600; color: #3f4653; letter-spacing: .3px; }
```
